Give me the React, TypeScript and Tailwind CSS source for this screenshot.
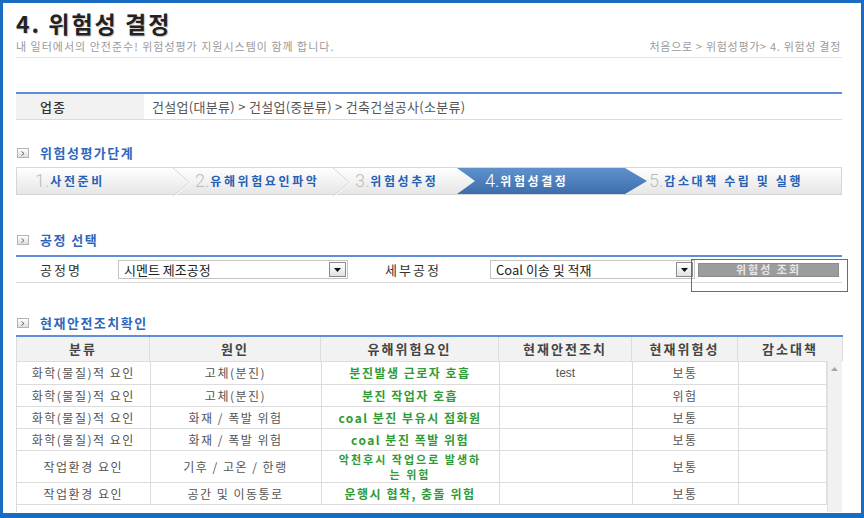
import React from 'react'

type Row = {
  cat: string
  cause: string
  hazard: string[]
  measure: string
  risk: string
  h: string
}

const rows: Row[] = [
  { cat: '화학(물질)적 요인', cause: '고체(분진)', hazard: ['분진발생 근로자 호흡'], measure: 'test', risk: '보통', h: 'h-[23px]' },
  { cat: '화학(물질)적 요인', cause: '고체(분진)', hazard: ['분진 작업자 호흡'], measure: '', risk: '위험', h: 'h-[22px]' },
  { cat: '화학(물질)적 요인', cause: '화재 / 폭발 위험', hazard: ['coal 분진 부유시 점화원'], measure: '', risk: '보통', h: 'h-[22px]' },
  { cat: '화학(물질)적 요인', cause: '화재 / 폭발 위험', hazard: ['coal 분진 폭발 위험'], measure: '', risk: '보통', h: 'h-[22px]' },
  { cat: '작업환경 요인', cause: '기후 / 고온 / 한랭', hazard: ['악천후시 작업으로 발생하', '는 위험'], measure: '', risk: '보통', h: 'h-[32px]' },
  { cat: '작업환경 요인', cause: '공간 및 이동통로', hazard: ['운행시 협착, 충돌 위험'], measure: '', risk: '보통', h: 'h-[22px]' },
]

function SectionTitle({ children }: { children: React.ReactNode }) {
  return (
    <div className="flex items-center h-[18px]">
      <span className="ml-[1px] w-[12px] h-[10px] border border-[#b4b4b4] bg-gradient-to-b from-white to-[#dedede] flex items-center justify-center">
        <svg width="4" height="5" viewBox="0 0 4 5">
          <path d="M0.5 0.5 L3 2.5 L0.5 4.5" fill="none" stroke="#666" strokeWidth="1" />
        </svg>
      </span>
      <span className="ml-[11px] text-[13px] font-bold tracking-[1.5px] text-[#2f66bd]">{children}</span>
    </div>
  )
}

function Chevron() {
  return (
    <svg width="18" height="28" viewBox="0 0 18 28" className="shrink-0">
      <path d="M0 0 L17 14 L0 28" fill="none" stroke="#d0d0d0" strokeWidth="1" />
      <path d="M1.5 0 L18 14 L1.5 28" fill="none" stroke="#ffffff" strokeWidth="1" />
    </svg>
  )
}

function StepLabel({ num, text, active }: { num: string; text: string; active?: boolean }) {
  return (
    <span className="flex items-center whitespace-nowrap">
      <span
        className={`font-['Roboto','Liberation_Sans',sans-serif] font-light text-[18px] leading-none ${
          active ? 'text-white' : 'text-[#bcbcbc]'
        }`}
      >
        {num}.
      </span>
      <span className={`ml-[1px] text-[12px] font-bold tracking-[2.6px] ${active ? 'text-white' : 'text-[#2461b5]'}`}>
        {text}
      </span>
    </span>
  )
}

function SelectBox({ value, width }: { value: string; width: string }) {
  return (
    <div className={`${width} h-[19px] border border-[#c4c4c4] bg-white flex items-center justify-between pl-[5px] pr-[1px]`}>
      <span className="text-[13px] text-[#222] whitespace-nowrap">{value}</span>
      <span className="w-[17px] h-[15px] border border-[#8a8a8a] bg-gradient-to-b from-white to-[#e2e2e2] flex items-center justify-center">
        <svg width="7" height="4" viewBox="0 0 7 4">
          <path d="M0 0 L7 0 L3.5 4 Z" fill="#111" />
        </svg>
      </span>
    </div>
  )
}

export default function App() {
  return (
    <div className="w-[864px] h-[518px] bg-white border-[#1a6cc2] border-t-[3px] border-l-[3px] border-r-[3px] border-b-[5px] overflow-hidden font-['Noto_Sans_CJK_KR','Noto_Sans',sans-serif]">
      <div className="pl-[13px] pr-[19px] flex flex-col">
        {/* title */}
        <div className="pt-[5px] pb-[4px] border-b border-[#e4e4e4]">
          <h1 className="h-[30px] text-[23px] leading-[30px] font-bold tracking-[2px] text-[#222] [text-shadow:1px_1px_1px_#c8c8c8]">
            4. 위험성 결정
          </h1>
          <div className="mt-[1px] flex items-center justify-between h-[14px] text-[11px] leading-[14px] text-[#9a9a9a]">
            <span className="tracking-[1px]">내 일터에서의 안전준수! 위험성평가 지원시스템이 함께 합니다.</span>
            <span className="mr-[1px] tracking-[0.7px]">처음으로 &gt; 위험성평가&gt; 4. 위험성 결정</span>
          </div>
        </div>

        {/* industry */}
        <div className="mt-[34px] flex border-t-2 border-[#5d8ed6] border-b border-b-[#dadada]">
          <div className="w-[128px] h-[25px] bg-[#f2f2f2] pl-[24px] flex items-center text-[13px] font-medium text-[#333] tracking-[1px]">
            업종
          </div>
          <div className="h-[25px] pl-[8px] flex items-center text-[13px] tracking-[0.3px] text-[#555]">
            건설업(대분류) &gt; 건설업(중분류) &gt; 건축건설공사(소분류)
          </div>
        </div>

        {/* steps */}
        <div className="mt-[24px]">
          <SectionTitle>위험성평가단계</SectionTitle>
        </div>
        <div className="mt-[5px] h-[28px] flex border border-[#d6d6d6] bg-gradient-to-b from-white to-[#e6e6e6]">
          <div className="w-[156px] pl-[18px] flex items-center">
            <StepLabel num="1" text="사전준비" />
          </div>
          <Chevron />
          <div className="w-[142px] pl-[4px] flex items-center">
            <StepLabel num="2" text="유해위험요인파악" />
          </div>
          <Chevron />
          <div className="w-[106px] pl-[4px] flex items-center">
            <StepLabel num="3" text="위험성추정" />
          </div>
          <div className="w-[190px] pl-[28px] flex items-center bg-gradient-to-b from-[#5f92cd] to-[#3d6eac] [clip-path:polygon(0_0,168px_0,190px_50%,168px_100%,0_100%,18px_50%)]">
            <StepLabel num="4" text="위험성결정" active />
          </div>
          <div className="flex-1 pl-[2px] flex items-center">
            <StepLabel num="5" text="감소대책 수립 및 실행" />
          </div>
        </div>

        {/* process select */}
        <div className="mt-[36px]">
          <SectionTitle>공정 선택</SectionTitle>
        </div>
        <div className="mt-[6px] h-[28px] flex items-center border-t-2 border-[#5d8ed6] border-b border-b-[#dadada]">
          <div className="w-[102px] pl-[24px] text-[13px] tracking-[2px] text-[#333]">공정명</div>
          <SelectBox value="시멘트 제조공정" width="w-[230px]" />
          <div className="w-[142px] pl-[37px] text-[13px] tracking-[2px] text-[#333]">세부공정</div>
          <SelectBox value="Coal 이송 및 적재" width="w-[205px]" />
          <div className="relative ml-[3px]">
            <div className="w-[141px] h-[14px] bg-[#9c9c9c] border border-[#8c8c8c] flex items-center justify-center text-[11px] font-bold tracking-[2px] text-[#e6e6e6]">
              위험성 조회
            </div>
            <div className="absolute -left-[6px] -top-[3px] -right-[8px] -bottom-[14px] shadow-[0_0_0_1px_#e53935]" />
          </div>
        </div>

        {/* safety measure table */}
        <div className="mt-[31px]">
          <SectionTitle>현재안전조치확인</SectionTitle>
        </div>
        <div className="mt-[3px] w-[826px]">
          <table className="w-[826px] table-fixed border-collapse border-t-2 border-t-[#5d8ed6]">
            <colgroup>
              <col className="w-[133px]" />
              <col className="w-[171px]" />
              <col className="w-[178px]" />
              <col className="w-[133px]" />
              <col className="w-[106px]" />
              <col className="w-[105px]" />
            </colgroup>
            <thead>
              <tr className="h-[25px] bg-[#f2f2f2]">
                {['분류', '원인', '유해위험요인', '현재안전조치', '현재위험성', '감소대책'].map((h) => (
                  <th key={h} className="border-x border-[#dcdcdc] text-[13px] font-semibold tracking-[2px] text-[#444] p-0">
                    {h}
                  </th>
                ))}
              </tr>
            </thead>
          </table>
          <div className="flex h-[151px] border-l border-[#dcdcdc]">
            <table className="w-[809px] h-fit table-fixed border-collapse">
              <colgroup>
                <col className="w-[133px]" />
                <col className="w-[171px]" />
                <col className="w-[178px]" />
                <col className="w-[133px]" />
                <col className="w-[106px]" />
                <col className="w-[88px]" />
              </colgroup>
              <tbody>
                {rows.map((r, i) => (
                  <tr key={i} className={`${r.h} text-[12px] tracking-[1.5px] text-[#555] text-center`}>
                    <td className="border border-l-0 border-[#dcdcdc] p-0">{r.cat}</td>
                    <td className="border border-[#dcdcdc] p-0">{r.cause}</td>
                    <td
                      className={`border border-[#dcdcdc] p-0 font-bold text-[#2f9b35] ${
                        r.hazard.length > 1 ? 'text-[11px] leading-[15px] tracking-[2px]' : ''
                      }`}
                    >
                      {r.hazard.map((l, k) => (
                        <div key={k} className="whitespace-nowrap">{l}</div>
                      ))}
                    </td>
                    <td className="border border-[#dcdcdc] p-0 font-['Liberation_Sans',sans-serif] tracking-normal">{r.measure}</td>
                    <td className="border border-[#dcdcdc] p-0">{r.risk}</td>
                    <td className="border border-[#dcdcdc] p-0" />
                  </tr>
                ))}
              </tbody>
            </table>
            <div className="w-[17px] border-l border-[#e2e2e2] bg-[#f1f1f1] flex flex-col items-center pt-[6px]">
              <svg width="7" height="4" viewBox="0 0 7 4">
                <path d="M0 4 L3.5 0 L7 4 Z" fill="#a6a6a6" />
              </svg>
            </div>
          </div>
        </div>
      </div>
    </div>
  )
}
